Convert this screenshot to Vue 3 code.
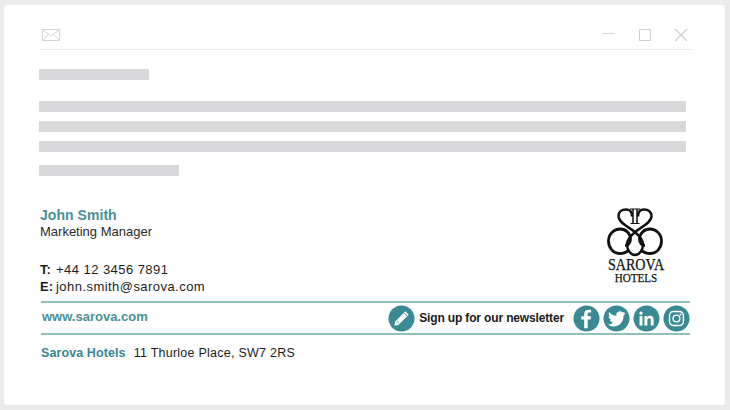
<script setup>
const bars = [
  { w: 110, gap: 21 },
  { w: 647, gap: 9 },
  { w: 647, gap: 9 },
  { w: 647, gap: 13 },
  { w: 140, gap: 0 },
]
</script>

<template>
  <div class="card">
    <header class="head">
      <svg class="mail" width="20" height="14" viewBox="0 0 20 14" fill="none" stroke="#d4d4d4" stroke-width="1">
        <rect x="1.5" y="1.5" width="17" height="11" />
        <path d="M1.5 1.5 10 8l8.5-6.5M1.5 12.5 7.5 6.5M18.500 12.500 12.500 6.500" />
      </svg>
      <div class="controls">
        <svg width="14" height="14" viewBox="0 0 14 14" stroke="#d6d6d6" fill="none"><path d="M0 5.500H13" /></svg>
        <svg width="14" height="14" viewBox="0 0 14 14" stroke="#d0d0d0" fill="none"><rect x="1.500" y="1.500" width="11" height="11" /></svg>
        <svg width="14" height="14" viewBox="0 0 14 14" stroke="#cfcfcf" stroke-width="1.200" fill="none"><path d="M1 1 13 13M13 1 1 13" /></svg>
      </div>
    </header>

    <div class="bars">
      <div v-for="(b, i) in bars" :key="i" class="bar" :style="{ width: b.w + 'px', marginBottom: b.gap + 'px' }"></div>
    </div>

    <section class="sig">
      <div class="top">
        <div class="who">
          <div class="name">John Smith</div>
          <div class="role">Marketing Manager</div>
          <div class="contact c1"><b>T:</b><span>+44 12 3456 7891</span></div>
          <div class="contact c2"><b>E:</b><span>john.smith@sarova.com</span></div>
        </div>
        <div class="logo">
          <svg width="60" height="50" viewBox="0 0 60 50" fill="none" stroke="#111">
            <path stroke-width="2.400" d="M26 8.500C26 4 24 1.500 20 1.500C15.500 1.500 12.500 4 12.500 8C12.500 15 23 19 29 24C34 28.500 37 32 37 36C37 42 33.500 47 29 47C24.500 47 21 42 21 36C21 32 24 28.500 29 24C35 19 45.500 15 45.500 8C45.500 4 42.500 1.500 38 1.500C34 1.500 32 4 32 8.500" />
            <path stroke-width="1.500" d="M27 1V15M31 1V15" />
            <path stroke-width="1.100" d="M24 1H34M24.500 15.500H33.500" />
            <path stroke-width="2.800" d="M23 42C20.500 44.500 17.500 45.500 13.500 45.500C7 45.500 2.500 39.500 2.500 33C2.500 26 8 21 14 21C20 21 24.500 25.500 24.500 31C24.500 35 22 37.500 19 37.500" />
            <path stroke-width="2.800" d="M35 42C37.500 44.500 40.500 45.500 44.500 45.500C51 45.500 55.500 39.500 55.500 33C55.500 26 50 21 44 21C38 21 33.500 25.500 33.500 31C33.500 35 36 37.500 39 37.500" />
          </svg>
          <div class="l1">SAROVA</div>
          <div class="l2">HOTELS</div>
        </div>
      </div>

      <div class="strip">
        <span class="web">www.sarova.com</span>
        <div class="cta">
          <svg class="ic pencil" viewBox="0 0 28 28">
            <circle cx="14" cy="14" r="13.500" fill="#3a8a94" />
            <path fill="#fff" d="M18 6.500 21.500 10 11 20.500 6.500 21.500 7.500 17Z" />
            <path stroke="#3a8a94" stroke-width="1" d="M16.500 8 20 11.500M9 16.500l2.500 2.500" />
          </svg>
          <span class="news">Sign up for our newsletter</span>
          <div class="social">
            <svg class="ic" viewBox="0 0 28 28">
              <circle cx="14" cy="14" r="13.500" fill="#3a8a94" />
              <path fill="#fff" d="M15.200 24v-9h3l.5-3.400h-3.500V9.500c0-1 .3-1.600 1.700-1.600h1.900V4.900c-.4 0-1.500-.1-2.700-.1-2.700 0-4.500 1.600-4.500 4.500v2.300H8.500V15h3.100v9Z" />
            </svg>
            <svg class="ic" viewBox="0 0 28 28">
              <circle cx="14" cy="14" r="13.500" fill="#3a8a94" />
              <path fill="#fff" d="M23 8.300c-.7.300-1.400.5-2.100.6.800-.5 1.300-1.200 1.600-2-.7.400-1.500.7-2.300.9a3.700 3.700 0 0 0-6.300 3.400c-3-.2-5.700-1.600-7.500-3.900-1 1.700-.5 3.800 1.100 4.900-.6 0-1.200-.2-1.700-.5 0 1.800 1.300 3.300 3 3.700-.5.100-1.100.2-1.700.1.500 1.500 1.900 2.500 3.500 2.600A7.500 7.500 0 0 1 5 20.600a10.500 10.500 0 0 0 16.200-9.300c.7-.8 1.300-1.500 1.800-3Z" />
            </svg>
            <svg class="ic" viewBox="0 0 28 28">
              <circle cx="14" cy="14" r="13.500" fill="#3a8a94" />
              <path fill="#fff" d="M6.800 11.500h3v9.700h-3ZM8.300 6.700a1.700 1.700 0 1 1 0 3.500 1.700 1.700 0 0 1 0-3.500ZM11.800 11.500h2.900v1.300c.5-.9 1.600-1.600 3-1.600 3 0 3.700 1.900 3.700 4.500v5.500h-3v-4.900c0-1.200 0-2.600-1.600-2.600s-1.900 1.200-1.900 2.500v5h-3.100Z" />
            </svg>
            <svg class="ic" viewBox="0 0 28 28">
              <circle cx="14" cy="14" r="13.500" fill="#3a8a94" />
              <rect x="6.800" y="6.800" width="14.400" height="14.400" rx="4" fill="none" stroke="#fff" stroke-width="1.500" />
              <circle cx="14" cy="14" r="3.500" fill="none" stroke="#fff" stroke-width="1.500" />
              <circle cx="18.200" cy="9.800" r="1" fill="#fff" />
            </svg>
          </div>
        </div>
      </div>

      <div class="addr"><b>Sarova Hotels</b><span>11 Thurloe Place, SW7 2RS</span></div>
    </section>
  </div>
</template>

<style>
html, body { margin: 0; background: #ebebeb; }
</style>

<style scoped>
.card {
  box-sizing: border-box;
  width: 721px;
  height: 400px;
  margin: 5px 0 0 4px;
  padding: 20px 0 0 35px;
  background: #fff;
  border-radius: 3px;
  font-family: "Liberation Sans", Arial, sans-serif;
  color: #1c1c1c;
}
.head {
  box-sizing: border-box;
  width: 653px;
  height: 25px;
  padding: 3px 4px 0 2px;
  border-bottom: 1px solid #ececec;
  display: flex;
  justify-content: space-between;
  align-items: flex-start;
}
.mail { display: block; }
.controls { display: flex; gap: 22px; }
.controls svg { display: block; }
.bars { padding-top: 19px; height: 107px; }
.bar { height: 11px; background: #d9d9db; }

.sig { width: 651px; margin-top: 31px; }
.top { display: flex; justify-content: space-between; height: 94px; padding-left: 1px; }
.name { font-size: 14px; line-height: 16px; font-weight: 700; color: #4a9096; letter-spacing: .05px; }
.role { font-size: 13px; line-height: 16px; color: #2a2a2a; margin-top: 1px; }
.contact { display: flex; font-size: 13px; line-height: 16px; }
.contact span { letter-spacing: .45px; }
.contact b { width: 16px; font-size: 13px; }
.c1 { margin-top: 22px; }
.c2 { margin-top: 1px; }
.logo { width: 60px; margin: 1px 24px 0 0; text-align: center; font-family: "Liberation Serif", serif; color: #111; -webkit-text-stroke: .25px #111; }
.logo svg { display: block; }
.l1 { font-size: 17px; line-height: 14px; margin: 0 -8px; transform: scaleX(.83); }
.l2 { font-size: 13.500px; line-height: 11px; margin: 0 -8px; transform: scaleX(.82); }

.strip {
  box-sizing: border-box;
  width: 649px;
  height: 34px;
  margin-left: 2px;
  border-top: 2px solid #8fbfc0;
  border-bottom: 2px solid #8fbfc0;
  display: flex;
  align-items: center;
  justify-content: space-between;
}
.web { font-size: 13px; font-weight: 700; color: #4a9096; margin-top: -3px; padding-left: 1px; }
.cta { display: flex; align-items: center; }
.ic { width: 27px; height: 27px; display: block; }
.news { font-size: 12px; font-weight: 700; color: #1a1a1a; margin: 0 9px 0 4px; letter-spacing: -.15px; }
.social { display: flex; gap: 3px; }
.addr { display: flex; margin: 11px 0 0 2px; font-size: 12.500px; line-height: 15px; }
.addr b { color: #3b8491; margin-right: 8px; letter-spacing: .1px; }
.addr span { letter-spacing: .25px; }
</style>
